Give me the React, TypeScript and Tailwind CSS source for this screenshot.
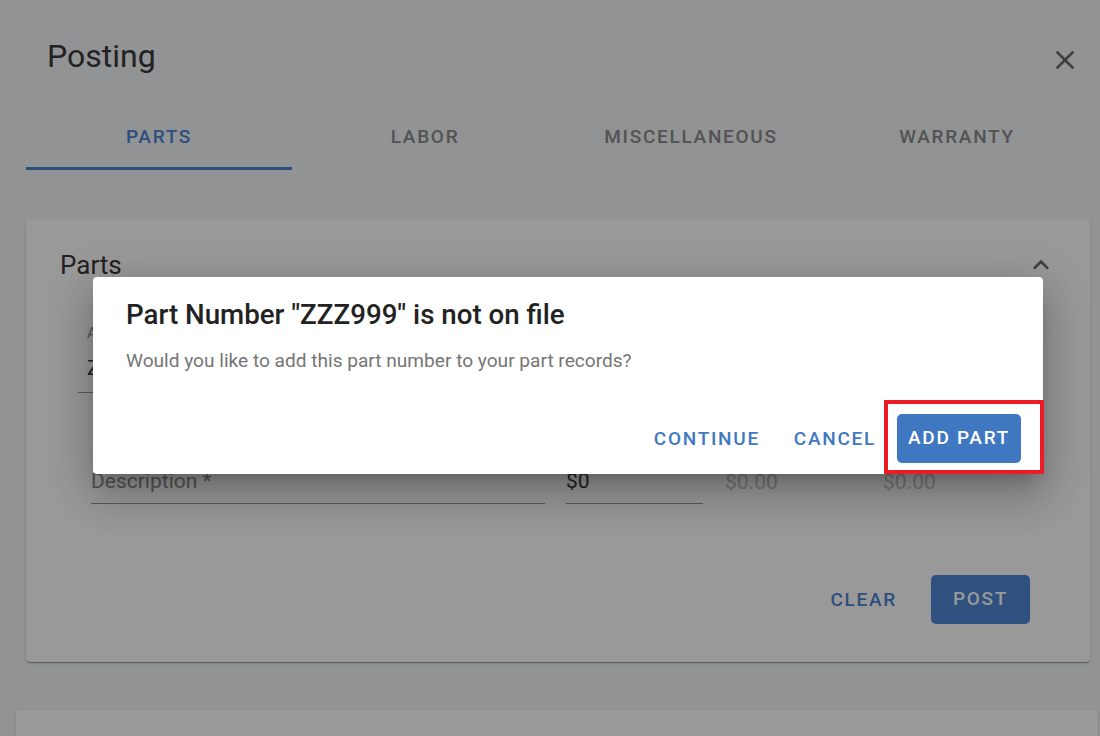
import { ReactNode } from 'react';

const tabs = ['Parts', 'Labor', 'Miscellaneous', 'Warranty'];

function CloseIcon() {
  return (
    <svg viewBox="0 0 24 24" className="h-8 w-8 fill-current">
      <path d="M19 6.41 17.59 5 12 10.59 6.41 5 5 6.41 10.59 12 5 17.59 6.41 19 12 13.41 17.59 19 19 17.59 13.41 12z" />
    </svg>
  );
}

function ChevronUp() {
  return (
    <svg viewBox="0 0 24 24" className="h-8 w-8 fill-current">
      <path d="M12 8l-6 6 1.41 1.41L12 10.83l4.59 4.58L18 14z" />
    </svg>
  );
}

function TextButton({ children }: { readonly children: ReactNode }) {
  return (
    <button className="rounded px-4 py-3 text-[19px] font-medium uppercase leading-6 tracking-[0.09em] text-[#3f78c1]">
      {children}
    </button>
  );
}

export default function App() {
  return (
    <div className="relative h-[736px] w-[1100px] overflow-hidden bg-[#f3f5f8] font-['Roboto',sans-serif]">
      {/* page behind the dialog */}
      <div className="flex items-start justify-between pl-[47px] pr-[19px] pt-[36px]">
        <h1 className="text-[32px] leading-10 font-normal text-[#3a3a3a]">Posting</h1>
        <button className="mt-[8px] text-[#6a6a6a]">
          <CloseIcon />
        </button>
      </div>

      <div className="ml-[26px] mr-[10px] mt-[32px] grid grid-cols-4">
        {tabs.map((tab, i) => (
          <div
            key={tab}
            className={`flex h-[62px] items-center justify-center border-b-[3px] text-[19px] font-medium uppercase tracking-[0.09em] ${
              i === 0 ? 'border-[#4a84d0] text-[#4a84d0]' : 'border-transparent text-[#8a8a8a]'
            }`}
          >
            {tab}
          </div>
        ))}
      </div>

      <div className="ml-[26px] mr-[10px] mt-[49px] h-[443px] rounded bg-white shadow-[0_2px_1px_-1px_rgba(0,0,0,0.2),0_1px_1px_0_rgba(0,0,0,0.14),0_1px_3px_0_rgba(0,0,0,0.12)]">
        <div className="flex items-center justify-between pl-[34px] pr-[33px] pt-[30px]">
          <h2 className="text-[26px] leading-8 text-[#3a3a3a]">Parts</h2>
          <span className="text-[#6a6a6a]">
            <ChevronUp />
          </span>
        </div>

        <div className="ml-[52px] mt-[42px] w-[460px] border-b border-[#969696] pb-[10px] pl-[9px]">
          <div className="text-[15px] leading-5 text-[#8e8e8e]">Alias / Part Number</div>
          <div className="mt-[11px] text-[21px] leading-7 text-[#3a3a3a]">ZZZ999</div>
        </div>

        <div className="ml-[65px] mt-[74px] flex items-end">
          <div className="w-[454px] border-b border-[#969696] pb-[8px] text-[21px] leading-7 text-[#8e8e8e]">
            Description *
          </div>
          <div className="ml-[21px] w-[137px] border-b border-[#969696] pb-[8px] text-[21px] leading-7 text-[#3a3a3a]">
            $0
          </div>
          <div className="ml-[22px] w-[158px] pb-[8px] text-[21px] leading-7 text-[#c6c6c6]">$0.00</div>
          <div className="pb-[8px] text-[21px] leading-7 text-[#c6c6c6]">$0.00</div>
        </div>

        <div className="mr-[60px] mt-[71px] flex items-center justify-end gap-[18px]">
          <button className="px-4 py-3 text-[19px] font-medium uppercase leading-6 tracking-[0.09em] text-[#4a84d0]">
            Clear
          </button>
          <button className="h-[49px] w-[99px] rounded-[5px] bg-[#4e88d6] text-[19px] font-medium uppercase tracking-[0.09em] text-white">
            Post
          </button>
        </div>
      </div>

      <div className="ml-[16px] mr-[2px] mt-[48px] h-[80px] rounded bg-white shadow-[0_2px_1px_-1px_rgba(0,0,0,0.2),0_1px_1px_0_rgba(0,0,0,0.14),0_1px_3px_0_rgba(0,0,0,0.12)]" />

      {/* backdrop */}
      <div className="absolute inset-0 bg-black/40" />

      {/* dialog */}
      <div className="absolute left-[93px] top-[277px] flex h-[197px] w-[950px] flex-col rounded bg-white shadow-[0_11px_15px_-7px_rgba(0,0,0,0.2),0_24px_38px_3px_rgba(0,0,0,0.14),0_9px_46px_8px_rgba(0,0,0,0.12)]">
        <h2 className="pl-[33px] pt-[22px] text-[27.7px] font-medium leading-8 text-[#222]">
          Part Number "ZZZ999" is not on file
        </h2>
        <p className="mt-[18px] pl-[33px] text-[19.1px] leading-6 text-[#757575]">
          Would you like to add this part number to your part records?
        </p>
        <div className="mt-auto flex items-center justify-end pb-[11px] pr-[22px]">
          <TextButton>Continue</TextButton>
          <div className="ml-[2px]">
            <TextButton>Cancel</TextButton>
          </div>
          <button className="ml-[5px] h-[49px] w-[124px] rounded-[5px] bg-[#3f78c1] text-[19px] font-medium uppercase tracking-[0.09em] text-white">
            Add Part
          </button>
        </div>
        <div className="absolute bottom-0 right-[-1px] h-[74px] w-[160px] border-[4px] border-[#ed1c24]" />
      </div>
    </div>
  );
}
